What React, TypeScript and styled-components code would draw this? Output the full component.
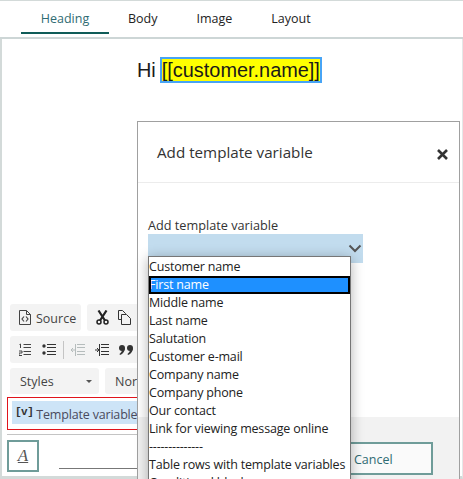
import React from 'react';
import styled, { createGlobalStyle } from 'styled-components';

const GlobalStyle = createGlobalStyle`
  html, body { margin: 0; padding: 0; background: #fff; }
  body { font-family: "Open Sans", "Noto Sans", sans-serif; }
`;

// --- Page shell ---

const Page = styled.div`
  position: relative;
  width: 463px;
  height: 479px;
  overflow: hidden;
  background: #fff;
  color: #333;
  box-sizing: border-box;
  border-top: 1px solid #d3dad9;
`;

const TabBar = styled.nav`
  display: flex;
  height: 38px;
  padding-left: 21px;
  box-sizing: border-box;
  border-bottom: 2px solid #cdd6d6;
  font-size: 12.5px;
`;

const Tab = styled.div<{ $active?: boolean }>`
  height: 33px;
  box-sizing: border-box;
  line-height: 36px;
  text-align: center;
  color: ${p => (p.$active ? '#2f6b73' : '#222')};
  width: ${p => (p.$active ? '88px' : 'auto')};
  margin-right: ${p => (p.$active ? '19px' : '39px')};
  border-bottom: ${p => (p.$active ? '2px solid #0f5c58' : 'none')};
`;

const Editor = styled.div`
  height: 440px;
  box-sizing: border-box;
  border-left: 2px solid #d3dad9;
  border-right: 1px solid #e4e8e8;
  border-bottom: 3px solid #d3dad9;
  padding-top: 18px;
  display: flex;
  flex-direction: column;
`;

const HeadingLine = styled.div`
  display: flex;
  align-items: center;
  padding-left: 135px;
  gap: 4px;
  height: 26px;
  font-family: "Liberation Sans", Arial, sans-serif;
  font-size: 19.9px;
  color: #1a1a1a;
`;

const VariableChip = styled.span`
  background: #ffff00;
  outline: 2px solid #47a4f5;
  outline-offset: -2px;
  padding: 0 2px;
  line-height: 26px;
`;

// --- Editor toolbars (run behind the dialog) ---

const ToolbarStack = styled.div`
  margin-top: auto;
  display: flex;
  flex-direction: column;
  padding-left: 8px;
  width: 135px;
  box-sizing: border-box;
  overflow: hidden;
`;

const ToolRow = styled.div<{ $gap?: number }>`
  display: flex;
  gap: 6px;
  margin-bottom: ${p => p.$gap ?? 5}px;
  white-space: nowrap;
`;

const ToolGroup = styled.div<{ $width: number; $height?: number; $pad?: number }>`
  flex: none;
  display: flex;
  align-items: center;
  width: ${p => p.$width}px;
  height: ${p => p.$height ?? 27}px;
  background: #f3f3f3;
  border-radius: 3px;
  font-size: 12.5px;
  color: #444;
  box-sizing: border-box;
  padding-left: ${p => p.$pad ?? 9}px;
`;

const ToolText = styled.span`
  margin-left: 5px;
  padding-top: 2px;
`;

const IconSlot = styled.span<{ $after: number }>`
  display: inline-flex;
  margin-right: ${p => p.$after}px;
`;

const Separator = styled.span`
  width: 1px;
  height: 18px;
  background: #c4c4c4;
  margin-right: 7px;
`;

const Caret = styled.span`
  margin-left: auto;
  margin-right: 7px;
  width: 0;
  height: 0;
  border-left: 3px solid transparent;
  border-right: 3px solid transparent;
  border-top: 3px solid #555;
`;

const RedFrame = styled.div`
  margin-left: -3px;
  width: 140px;
  height: 33px;
  box-sizing: border-box;
  border: 1px solid #e0141c;
  border-right: none;
  padding: 3px 0 0 4px;
  margin-bottom: 4px;
`;

const TemplateChip = styled.div`
  display: flex;
  align-items: center;
  height: 23px;
  background: #cde4f7;
  padding-left: 3px;
  font-size: 12.5px;
  letter-spacing: -0.18px;
  color: #4a4a5c;
  white-space: nowrap;
`;

const ChipLabel = styled.span`
  padding-top: 3px;
`;

const ChipIcon = styled.span`
  font-family: "Liberation Mono", monospace;
  font-weight: 700;
  font-size: 11px;
  letter-spacing: -0.5px;
  color: #333;
  margin-right: 3px;
  position: relative;
  top: -1px;
`;

const Footer = styled.div`
  display: flex;
  align-items: flex-start;
  padding-top: 5px;
  margin-left: -3px;
  height: 42px;
  width: 138px;
  box-sizing: border-box;
  border-top: 1px solid #c4c4c4;
`;

const FontButton = styled.div`
  width: 32px;
  height: 32px;
  box-sizing: border-box;
  border: 2px solid #6f9c99;
  display: flex;
  align-items: center;
  justify-content: center;
  font-family: "Liberation Serif", serif;
  font-style: italic;
  font-size: 17px;
  color: #555;
  text-decoration: underline;
`;

const FooterLine = styled.div`
  flex: 1;
  margin: 28px 0 0 20px;
  height: 1px;
  background: #777;
`;

// --- Dialog over the editor ---

const Dialog = styled.div`
  position: absolute;
  left: 137px;
  top: 120px;
  width: 323px;
  height: 380px;
  box-sizing: border-box;
  background: #fff;
  border: 1px solid #a0a0a0;
  display: flex;
  flex-direction: column;
`;

const DialogHeader = styled.header`
  height: 61px;
  flex: none;
  box-sizing: border-box;
  border-bottom: 1px solid #ececec;
  display: flex;
  align-items: center;
  justify-content: space-between;
  padding: 0 11px 0 19px;
  font-size: 15.2px;
  color: #333;
`;

const CloseIcon = styled.svg`
  margin-top: 5px;
`;

const DialogBody = styled.div`
  height: 234px;
  flex: none;
  box-sizing: border-box;
  padding: 34px 0 0 10px;
  font-size: 12.7px;
  color: #333;
`;

const FieldLabel = styled.div`
  height: 17px;
  line-height: 17px;
`;

const SelectBox = styled.div`
  width: 215px;
  height: 29px;
  background: #c2dcee;
  display: flex;
  align-items: center;
  justify-content: flex-end;
  padding-right: 1px;
  box-sizing: border-box;
`;

const DialogFooter = styled.footer`
  flex: 1;
  background: #f2f2f2;
  padding: 25px 0 0 150px;
`;

const CancelButton = styled.div`
  width: 145px;
  height: 33px;
  box-sizing: border-box;
  border: 2px solid #6f9c99;
  background: #fafafa;
  color: #2f6b73;
  font-size: 12.5px;
  line-height: 31px;
  padding-left: 64px;
`;

const OptionList = styled.ul`
  position: absolute;
  left: 10px;
  top: 134px;
  width: 203px;
  margin: 0;
  padding: 1px 0 0;
  list-style: none;
  box-sizing: border-box;
  background: #fff;
  border: 1px solid #767676;
  box-shadow: 0 2px 12px rgba(0, 0, 0, 0.3);
  font-size: 12.5px;
  letter-spacing: -0.18px;
  color: #222;
`;

const Option = styled.li<{ $selected?: boolean }>`
  height: 18px;
  line-height: 18px;
  white-space: nowrap;
  box-sizing: border-box;
  ${p =>
    p.$selected &&
    `
    background: #1e90ff;
    color: #fff;
    outline: 2px solid #000;
    outline-offset: -2px;
    line-height: 17px;
  `}
`;

// --- Toolbar icons ---

const SourceIcon = () => (
  <svg width="12" height="15" viewBox="0 0 12 15" fill="none" stroke="#444">
    <path d="M.5.5h7l4 4v10h-11z" />
    <path d="M7.500.5v4h4" />
    <path d="M5 6.500 3 9l2 2.500M7 6.500 9 9l-2 2.500" strokeWidth="1.2" />
  </svg>
);

const ScissorsIcon = () => (
  <svg width="13" height="15" viewBox="0 0 13 15" fill="none" stroke="#222">
    <path d="M2.500.5l6.500 10M10.500.5 4 10.500" strokeWidth="2.2" />
    <circle cx="3" cy="12" r="2" strokeWidth="1.5" />
    <circle cx="10" cy="12" r="2" strokeWidth="1.5" />
  </svg>
);

const CopyIcon = () => (
  <svg width="13" height="15" viewBox="0 0 13 15" fill="none" stroke="#333">
    <path d="M.5.5h4l3 3v1M.5.500v9h3" />
    <path d="M3.500 4.500h5l4 4v6h-9z" fill="#f3f3f3" />
  </svg>
);

const NumberedListIcon = () => (
  <svg width="12" height="13" viewBox="0 0 12 13" stroke="#444" fill="none">
    <path d="M.5 1.500 1.500 1v4M4.500 1.500H12M4.500 4.500H12M4.500 8.500H12M4.500 11.500H12M0 8h3v2H0v2.500h3" />
  </svg>
);

const BulletListIcon = () => (
  <svg width="14" height="12" viewBox="0 0 14 12" stroke="#333" fill="none">
    <circle cx="2" cy="2" r="1.7" fill="#333" stroke="none" />
    <circle cx="2" cy="9" r="1.7" fill="#333" stroke="none" />
    <path d="M5 .5h9M5 3.500h9M5 7.500h9M5 10.500h9" />
  </svg>
);

const OutdentIcon = () => (
  <svg width="14" height="12" viewBox="0 0 14 12" stroke="#b5bcbc" fill="none">
    <path d="M6 .5h8M6 3.500h8M6 7.500h8M6 10.500h8M4.500 0v12M4 6H0M2 4 0 6l2 2" />
  </svg>
);

const IndentIcon = () => (
  <svg width="14" height="12" viewBox="0 0 14 12" stroke="#333" fill="none">
    <path d="M6 .5h8M6 3.500h8M6 7.500h8M6 10.500h8M4.500 0v12M0 6h3M2 4l2 2-2 2" />
  </svg>
);

const QuoteIcon = () => (
  <svg width="14" height="10" viewBox="0 0 14 10" fill="#333">
    <circle cx="3" cy="3" r="3" />
    <circle cx="11" cy="3" r="3" />
    <path d="M6 3c0 3-2 6-5 7l-.5-1C2 8 3 6 3 5zM14 3c0 3-2 6-5 7l-.5-1c1.500-1 2.500-3 2.500-4z" />
  </svg>
);

const options = [
  'Customer name',
  'First name',
  'Middle name',
  'Last name',
  'Salutation',
  'Customer e-mail',
  'Company name',
  'Company phone',
  'Our contact',
  'Link for viewing message online',
  '--------------',
  'Table rows with template variables',
  'Conditional blocks',
];

export default function App() {
  return (
    <Page>
      <GlobalStyle />
      <TabBar>
        <Tab $active>Heading</Tab>
        <Tab>Body</Tab>
        <Tab>Image</Tab>
        <Tab>Layout</Tab>
      </TabBar>
      <Editor>
        <HeadingLine>
          Hi <VariableChip>[[customer.name]]</VariableChip>
        </HeadingLine>
        <ToolbarStack>
          <ToolRow>
            <ToolGroup $width={71}>
              <SourceIcon />
              <ToolText>Source</ToolText>
            </ToolGroup>
            <ToolGroup $width={120}>
              <IconSlot $after={9}><ScissorsIcon /></IconSlot>
              <IconSlot $after={9}><CopyIcon /></IconSlot>
            </ToolGroup>
          </ToolRow>
          <ToolRow>
            <ToolGroup $width={200}>
              <IconSlot $after={11}><NumberedListIcon /></IconSlot>
              <IconSlot $after={7}><BulletListIcon /></IconSlot>
              <Separator />
              <IconSlot $after={10}><OutdentIcon /></IconSlot>
              <IconSlot $after={10}><IndentIcon /></IconSlot>
              <IconSlot $after={10}><QuoteIcon /></IconSlot>
            </ToolGroup>
          </ToolRow>
          <ToolRow $gap={3}>
            <ToolGroup $width={89} $height={26} $pad={10}>
              Styles
              <Caret />
            </ToolGroup>
            <ToolGroup $width={90} $height={26} $pad={10}>Normal</ToolGroup>
          </ToolRow>
          <RedFrame>
            <TemplateChip>
              <ChipIcon>[v]</ChipIcon>
              <ChipLabel>Template variable</ChipLabel>
            </TemplateChip>
          </RedFrame>
          <Footer>
            <FontButton>A</FontButton>
            <FooterLine />
          </Footer>
        </ToolbarStack>
      </Editor>
      <Dialog>
        <DialogHeader>
          Add template variable
          <CloseIcon width="11" height="11" viewBox="0 0 11 11" stroke="#333" strokeWidth="2.6">
            <path d="M1 1l9 9M10 1l-9 9" />
          </CloseIcon>
        </DialogHeader>
        <DialogBody>
          <FieldLabel>Add template variable</FieldLabel>
          <SelectBox>
            <svg width="14" height="9" viewBox="0 0 14 9" fill="none" stroke="#555" strokeWidth="2">
              <path d="M1.500 1.500 7 7l5.500-5.500" />
            </svg>
          </SelectBox>
        </DialogBody>
        <DialogFooter>
          <CancelButton>Cancel</CancelButton>
        </DialogFooter>
        <OptionList>
          {options.map((option, i) => (
            <Option key={option} $selected={i === 1}>{option}</Option>
          ))}
        </OptionList>
      </Dialog>
    </Page>
  );
}
